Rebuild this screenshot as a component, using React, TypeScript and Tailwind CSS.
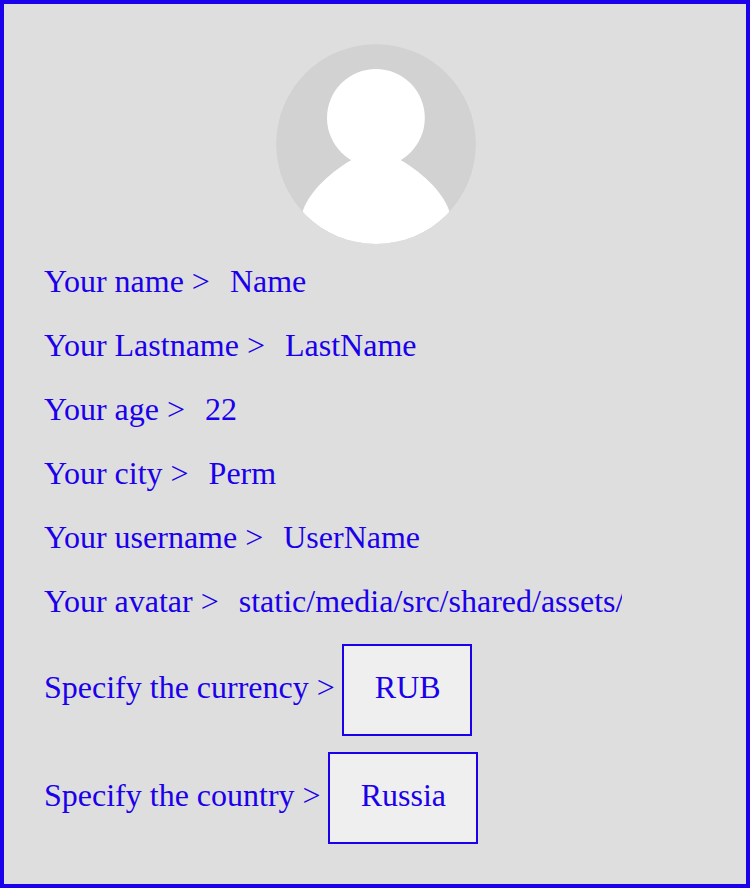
import React from "react";

const fields = [
  { label: "Your name", value: "Name" },
  { label: "Your Lastname", value: "LastName" },
  { label: "Your age", value: "22" },
  { label: "Your city", value: "Perm" },
  { label: "Your username", value: "UserName" },
  { label: "Your avatar", value: "static/media/src/shared/assets/" },
];

const selects = [
  { label: "Specify the currency", value: "RUB", width: "w-[130px]" },
  { label: "Specify the country", value: "Russia", width: "w-[150px]" },
];

function Avatar() {
  return (
    <svg className="size-[200px] rounded-full" viewBox="0 0 200 200">
      <defs>
        <clipPath id="disc">
          <circle cx="100" cy="100" r="100" />
        </clipPath>
      </defs>
      <g clipPath="url(#disc)">
        <rect width="200" height="200" fill="#d2d2d2" />
        <circle cx="99.9" cy="73.9" r="48.9" fill="#fff" />
        <path d="M76 115.8C50 130.5 31 152 26.5 168V200H173.5V168C169 152 150 130.5 124 115.8Z" fill="#fff" />
      </g>
    </svg>
  );
}

export default function App() {
  return (
    <main className="h-[888px] w-[750px] border-4 border-[#1a00eb] bg-[#dedede] p-10 font-['Liberation_Serif',serif] text-[32px] leading-9 text-[#1a00eb]">
      <div className="flex justify-center pl-0.5">
        <Avatar />
      </div>
      <div className="mt-[19px] flex flex-col gap-7">
        {fields.map((field) => (
          <div key={field.label} className="flex whitespace-pre">
            <span>{field.label} &gt;</span>
            <span className="ml-5 w-[383px] overflow-hidden">{field.value}</span>
          </div>
        ))}
      </div>
      <div className="mt-[25px] flex flex-col gap-4">
        {selects.map((select) => (
          <div key={select.label} className="flex items-center whitespace-nowrap">
            <span className="mr-[7px] pb-1.5">{select.label} &gt;</span>
            <button className={`h-[92px] border-2 border-[#1a00eb] bg-[#efefef] pb-[7px] pl-[31px] text-left ${select.width}`}>
              {select.value}
            </button>
          </div>
        ))}
      </div>
    </main>
  );
}
